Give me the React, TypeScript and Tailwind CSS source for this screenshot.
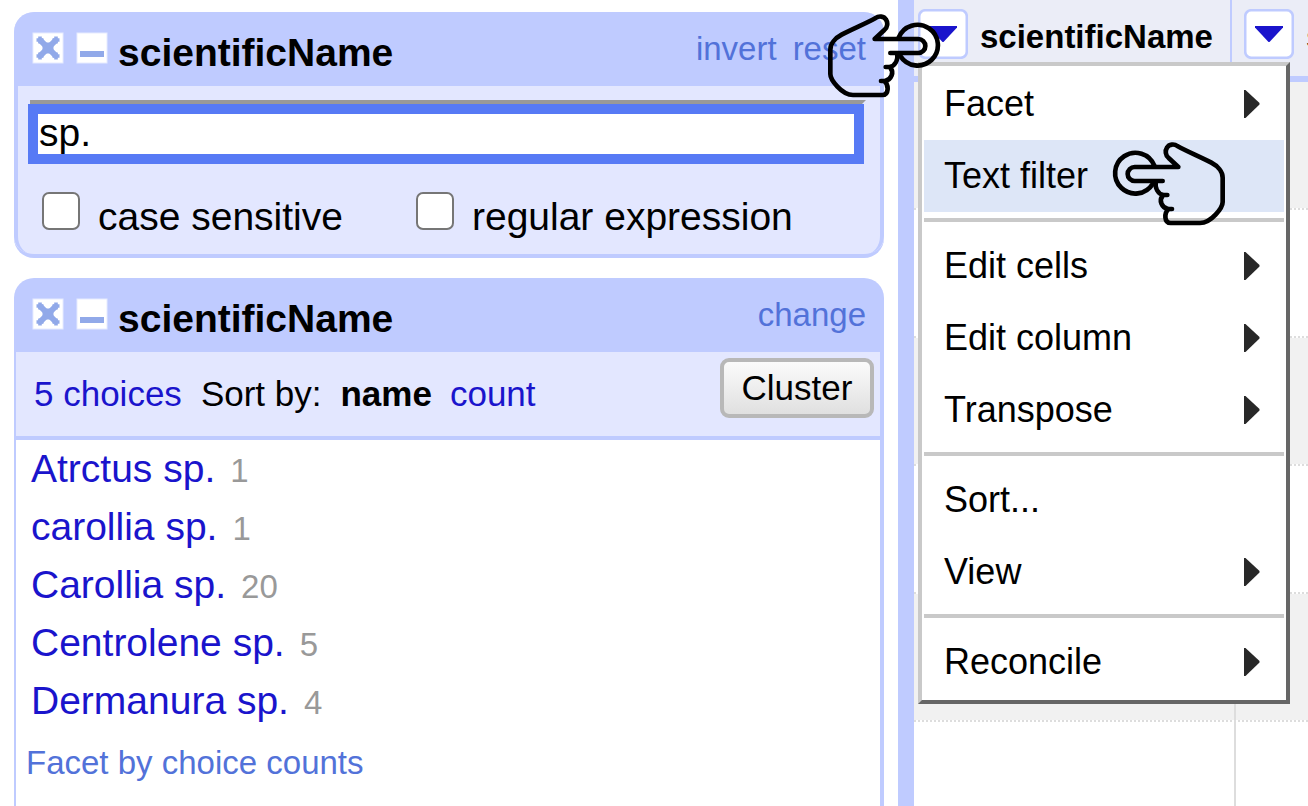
import React from "react";

const choices = [
  { name: "Atrctus sp.", count: 1 },
  { name: "carollia sp.", count: 1 },
  { name: "Carollia sp.", count: 20 },
  { name: "Centrolene sp.", count: 5 },
  { name: "Dermanura sp.", count: 4 },
];

const menuGroups = [
  [
    { label: "Facet", sub: true, active: false },
    { label: "Text filter", sub: false, active: true },
  ],
  [
    { label: "Edit cells", sub: true, active: false },
    { label: "Edit column", sub: true, active: false },
    { label: "Transpose", sub: true, active: false },
  ],
  [
    { label: "Sort...", sub: false, active: false },
    { label: "View", sub: true, active: false },
  ],
  [{ label: "Reconcile", sub: true, active: false }],
];

function CloseIcon() {
  return (
    <svg className="block h-[32px] w-[32px]" viewBox="0 0 32 32">
      <rect x="0.5" y="0.5" width="31" height="31" fill="#e6ebff" />
      <rect x="1.5" y="1.5" width="29" height="29" fill="#fff" />
      <g stroke="#91a9e9" fill="none">
        <path d="M8 8L24 24M24 8L8 24" strokeWidth="6" />
        <path
          d="M4.500 8h7M8 4.500v7M20.500 8h7M24 4.500v7M4.500 24h7M8 20.500v7M20.500 24h7M24 20.500v7"
          strokeWidth="3.600"
        />
      </g>
      <rect x="10.500" y="10.500" width="11" height="11" rx="1" fill="#91a9e9" />
    </svg>
  );
}

function MinimizeIcon() {
  return (
    <svg className="block h-[32px] w-[32px]" viewBox="0 0 32 32">
      <rect x="0.5" y="0.5" width="31" height="31" fill="#e6ebff" />
      <rect x="1.5" y="1.5" width="29" height="29" fill="#fff" />
      <rect x="4" y="19" width="24" height="6" fill="#91a9e9" />
    </svg>
  );
}

function FacetHeader({ children }: { children: React.ReactNode }) {
  return (
    <div className="flex h-[74px] items-start bg-[#bfcbff] pl-[18px] pr-[18px]">
      <div className="flex gap-[12px] pt-[20px]">
        <CloseIcon />
        <MinimizeIcon />
      </div>
      <div className="ml-[10px] pt-[21px] text-[39px] font-bold leading-[40px] text-black">scientificName</div>
      <div className="ml-auto flex gap-[16px] pt-[17px] text-[33px] leading-[40px] text-[#5272d9]">{children}</div>
    </div>
  );
}

function Check({ label }: { label: string }) {
  return (
    <div className="flex items-start">
      <span className="h-[38px] w-[38px] rounded-[7px] border-2 border-[#767676] bg-white" />
      <span className="ml-[18px] mt-[5px] text-[39px] leading-[40px]">{label}</span>
    </div>
  );
}

function MenuButton() {
  return (
    <svg className="block h-[50px] w-[50px] shrink-0" viewBox="0 0 50 50">
      <rect x="1.2" y="1.2" width="47.6" height="47.6" rx="6" fill="#fff" stroke="#bfcbff" strokeWidth="2.6" />
      <path d="M11 17h28v1.500L25.500 33h-1L11 18.500z" fill="#1a14cc" />
    </svg>
  );
}

function PointingHand() {
  return (
    <svg
      className="block h-[110px] w-[140px]"
      viewBox="0 0 420 330"
      fill="none"
      stroke="#000"
      strokeWidth="14"
      strokeLinecap="round"
      strokeLinejoin="round"
    >
      <path d="M163 107A61 61 0 1 0 158 162" />
      <path d="M188 153H104A21 21 0 0 1 104 111H235L206 84C196 76 195 62 201 53C207 42 223 41 232 48C262 65 300 80 334 98C353 108 368 125 368 143V216C368 233 334 279 300 279H212C192 279 192 249 206 237H216" />
      <path d="M167 155C165 175 174 191 190 195H202M188 197C176 211 185 233 204 237" />
    </svg>
  );
}

function FacetPanels() {
  return (
    <div className="flex w-[898px] shrink-0 flex-col gap-[20px] pl-[14px] pr-[14px] pt-[12px]">
      <section className="h-[246px] shrink-0 overflow-hidden rounded-[20px] border-b-4 border-[#bfcbff] bg-[#e3e7ff]">
        <FacetHeader>
          <span>invert</span>
          <span>reset</span>
        </FacetHeader>
        <div className="h-[168px] rounded-b-[18px] border-x-4 border-[#bfcbff] px-[10px] pt-[14px]">
          <div className="ml-[2px] h-[4px] w-[836px] border-r-4 border-t-4 border-r-transparent border-t-[#999]" />
          <div className="h-[60px] w-[836px] border-[10px] border-[#577af5] bg-white">
            <div className="h-[40px] pl-px text-[39px] leading-[38px]">sp.</div>
          </div>
          <div className="flex gap-[73px] pl-[14px] pt-[28px]">
            <Check label="case sensitive" />
            <Check label="regular expression" />
          </div>
        </div>
      </section>

      <section className="h-[600px] shrink-0 overflow-hidden rounded-t-[20px] bg-white">
        <FacetHeader>
          <span>change</span>
        </FacetHeader>
        <div className="h-[526px] border-l-2 border-r-4 border-[#bfcbff]">
          <div className="flex h-[88px] items-start justify-between border-b-4 border-[#bfcbff] bg-[#e3e7ff] pl-[18px] pr-[6px]">
            <div className="flex pt-[21px] text-[35px] leading-[41px] text-[#1a14cc]">
              <span>5 choices</span>
              <span className="ml-[19px] text-black">Sort by:</span>
              <span className="ml-[19px] font-bold text-black">name</span>
              <span className="ml-[18px]">count</span>
            </div>
            <div className="mt-[6px] h-[60px] w-[154px] rounded-[9px] border-4 border-[#b8b8b8] bg-linear-to-b from-[#fbfbfb] to-[#e0e0e0] text-center text-[35px] leading-[51px]">
              Cluster
            </div>
          </div>
          {choices.map((c) => (
            <div key={c.name} className="flex h-[58px] items-baseline pl-[15px] leading-[58px]">
              <span className="text-[39px] text-[#1a14cc]">{c.name}</span>
              <span className="ml-[15px] text-[33px] text-[#999]">{c.count}</span>
            </div>
          ))}
          <div className="pl-[10px] pt-[13px] text-[33px] leading-[40px] text-[#5272d9]">Facet by choice counts</div>
        </div>
      </section>
    </div>
  );
}

function DataGrid() {
  const rows = [0, 1, 2, 3, 4, 5];
  return (
    <div className="min-w-0 flex-1 overflow-hidden">
      <div className="flex h-[82px] border-b-[6px] border-[#bfcbff] bg-[#ebedf7]">
        <div className="flex w-[318px] shrink-0 border-r-2 border-[#bfcbff] pl-[4px] pt-[9px]">
          <MenuButton />
          <span className="ml-[12px] mt-[8px] text-[33px] font-bold leading-[40px]">scientificName</span>
        </div>
        <div className="flex shrink-0 pl-[12px] pt-[9px]">
          <MenuButton />
          <span className="ml-[12px] mt-[8px] text-[33px] font-bold leading-[40px]">s</span>
        </div>
      </div>
      {rows.map((r) => (
        <div
          key={r}
          className="flex h-[128px] border-b-2 border-dotted border-[#ddd] bg-clip-padding odd:bg-white even:bg-[#f1f1f1]"
        >
          <div className="w-[322px] border-r-2 border-solid border-[#ddd]" />
        </div>
      ))}
    </div>
  );
}

function ColumnMenu() {
  return (
    <div className="absolute left-[918px] top-[62px] h-[642px] w-[372px] border-4 border-b-[#666] border-l-[#c9c9c9] border-r-[#666] border-t-[#c9c9c9] bg-white p-[2px]">
      {menuGroups.map((group, gi) => (
        <div key={gi}>
          {gi > 0 && <div className="mb-[8px] mt-[6px] h-[4px] bg-[#c9c9c9]" />}
          {group.map((item) => (
            <div
              key={item.label}
              className={
                "flex h-[72px] items-center justify-between pl-[20px] pr-[24px] text-[36px] leading-[72px] " +
                (item.active ? "bg-[#dde6f7]" : "bg-white")
              }
            >
              <span>{item.label}</span>
              {item.sub && (
                <svg className="h-[28px] w-[16px]" viewBox="0 0 16 28">
                  <path d="M0 0h1.500L15.500 13v1.500L1.500 28H0z" fill="#282828" />
                </svg>
              )}
            </div>
          ))}
        </div>
      ))}
    </div>
  );
}

export default function App() {
  return (
    <div className="relative flex h-[806px] w-[1308px] overflow-hidden bg-white font-['Liberation_Sans',Arial,sans-serif] whitespace-nowrap text-black">
      <FacetPanels />
      <div className="w-[16px] shrink-0 bg-[#bfcbff]" />
      <DataGrid />
      <ColumnMenu />
      <div className="absolute left-[813px] top-[2px] -scale-x-100">
        <PointingHand />
      </div>
      <div className="absolute left-[1100px] top-[130px]">
        <PointingHand />
      </div>
    </div>
  );
}
